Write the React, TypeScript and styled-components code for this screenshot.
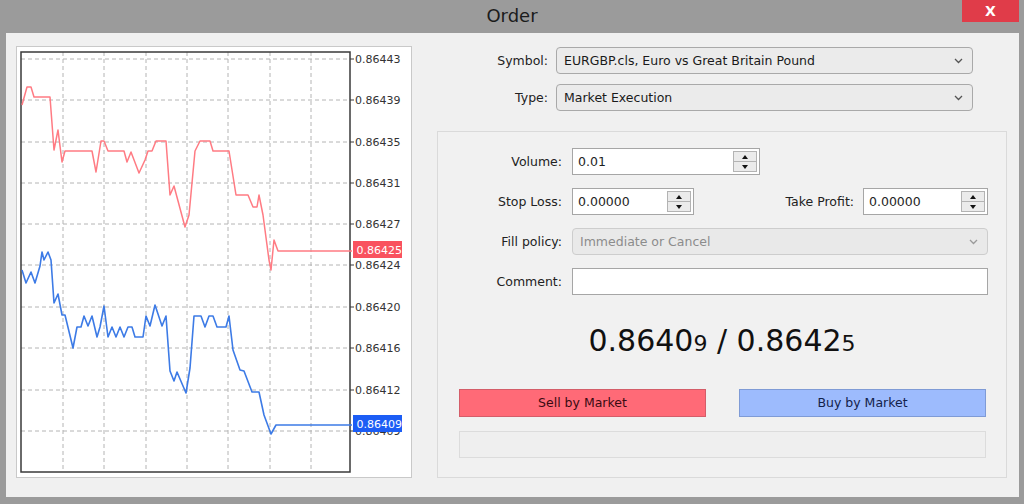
import React from "react";
import styled, { createGlobalStyle } from "styled-components";

const GlobalStyle = createGlobalStyle`
  html, body { margin: 0; padding: 0; background: #9b9b9b; }
  body { font-family: "DejaVu Sans", Verdana, sans-serif; }
  * { box-sizing: border-box; }
`;

const Window = styled.div`
  width: 1024px;
  height: 504px;
  background: #9b9b9b;
  display: flex;
  flex-direction: column;
  overflow: hidden;
`;

const TitleBar = styled.div`
  height: 33px;
  display: grid;
  grid-template-columns: 1fr auto 1fr;
  align-items: start;
`;

const Title = styled.div`
  grid-column: 2;
  font-size: 18px;
  line-height: 31px;
  color: #1c1c1c;
`;

const CloseButton = styled.div`
  grid-column: 3;
  justify-self: end;
  margin-right: 5px;
  width: 57px;
  height: 22px;
  background: #e03c49;
  color: #fff;
  font-size: 14px;
  font-weight: bold;
  line-height: 22px;
  text-align: center;
`;

const Body = styled.div`
  margin: 0 5px 0 6px;
  height: 464px;
  background: #f0f0f0;
  display: flex;
  align-items: flex-start;
  padding: 13px 0 0 10px;
`;

const ChartPanel = styled.div`
  width: 396px;
  height: 432px;
  border: 1px solid #c9c9c9;
  background: #fff;
  flex-shrink: 0;
  display: flex;
`;

const RightCol = styled.div`
  flex: 1;
  padding-top: 1px;
  display: flex;
  flex-direction: column;
`;

const TopGrid = styled.div`
  display: grid;
  grid-template-columns: 136px 417px;
  grid-auto-rows: 27px;
  column-gap: 8px;
  row-gap: 10px;
  align-items: center;
`;

const Label = styled.div`
  font-size: 12.5px;
  color: #222;
  text-align: right;
  white-space: nowrap;
`;

const SelectBox = styled.div<{ $disabled?: boolean }>`
  height: 27px;
  border: 1px solid ${(p) => (p.$disabled ? "#cdcdcd" : "#a9a9a9")};
  border-radius: 4px;
  background: ${(p) => (p.$disabled ? "#e9e9e9" : "#ebebeb")};
  display: flex;
  align-items: center;
  justify-content: space-between;
  padding: 0 9px 0 7px;
  font-size: 12.5px;
  color: ${(p) => (p.$disabled ? "#8c8c8c" : "#1a1a1a")};
  white-space: nowrap;
`;

const GroupBox = styled.div`
  margin: 20px 0 0 25px;
  width: 570px;
  height: 347px;
  border: 1px solid #dadada;
  background: #f1f1f1;
  display: flex;
  flex-direction: column;
  padding-top: 16px;
`;

const FormGrid = styled.div`
  display: grid;
  grid-template-columns: 124px 1fr;
  grid-auto-rows: 27px;
  column-gap: 10px;
  row-gap: 13px;
  padding-right: 18px;
  align-items: center;
`;

const InputBox = styled.div<{ $w?: number }>`
  width: ${(p) => (p.$w ? `${p.$w}px` : "100%")};
  height: 27px;
  border: 1px solid #a6a6a6;
  background: #fff;
  display: flex;
  align-items: stretch;
`;

const InputText = styled.div`
  flex: 1;
  padding-left: 5px;
  font-size: 12.5px;
  line-height: 25px;
  color: #1e1e1e;
`;

const Spinner = styled.div`
  width: 24px;
  margin: 2px 2px 2px 0;
  border: 1px solid #b3b3b3;
  background: #ebebeb;
  display: flex;
  flex-direction: column;
`;

const SpinHalf = styled.div<{ $down?: boolean }>`
  flex: 1;
  display: flex;
  align-items: center;
  justify-content: center;
  border-top: ${(p) => (p.$down ? "1px solid #b3b3b3" : "none")};
`;

const Triangle = styled.div<{ $down?: boolean }>`
  width: 0;
  height: 0;
  border-left: 3.5px solid transparent;
  border-right: 3.5px solid transparent;
  ${(p) =>
    p.$down
      ? "border-top: 4px solid #111;"
      : "border-bottom: 4px solid #111;"}
`;

const SplitRow = styled.div`
  display: flex;
  justify-content: space-between;
  align-items: center;
`;

const InlineGroup = styled.div`
  display: flex;
  align-items: center;
  gap: 9px;
`;

const Price = styled.div`
  margin-top: 28px;
  height: 36px;
  line-height: 36px;
  font-size: 30px;
  color: #111;
  text-align: center;
  white-space: nowrap;
`;

const Small = styled.span`
  font-size: 22px;
`;

const ButtonRow = styled.div`
  margin-top: 30px;
  padding: 0 20px 0 21px;
  display: flex;
  gap: 33px;
`;

const TradeButton = styled.div<{ $kind: "sell" | "buy" }>`
  flex: 1;
  height: 28px;
  border: 1px solid ${(p) => (p.$kind === "sell" ? "#d45d69" : "#7f9bd6")};
  background: ${(p) => (p.$kind === "sell" ? "#ff6a77" : "#9dbbfd")};
  color: ${(p) => (p.$kind === "sell" ? "#3a0a12" : "#13224a")};
  font-size: 12.5px;
  line-height: 26px;
  text-align: center;
`;

const StatusBar = styled.div`
  margin: 14px 20px 0 21px;
  height: 27px;
  border: 1px solid #dcdcdc;
  background: #efefef;
`;

const Chevron: React.FC<{ color?: string }> = ({ color = "#555" }) => (
  <svg width="9" height="6" viewBox="0 0 9 6">
    <path d="M1 1 L4.5 4.5 L8 1" fill="none" stroke={color} strokeWidth="1.3" />
  </svg>
);

const SpinInput: React.FC<{ w?: number; value: string }> = ({ w, value }) => (
  <InputBox $w={w}>
    <InputText>{value}</InputText>
    <Spinner>
      <SpinHalf>
        <Triangle />
      </SpinHalf>
      <SpinHalf $down>
        <Triangle $down />
      </SpinHalf>
    </Spinner>
  </InputBox>
);

const gridX = [46, 87, 129, 170, 211, 253, 294];
const gridY = [12, 53, 95, 136, 177, 218, 260, 301, 343, 384];
const axisLabels = [
  "0.86443",
  "0.86439",
  "0.86435",
  "0.86431",
  "0.86427",
  "0.86424",
  "0.86420",
  "0.86416",
  "0.86412",
  "0.86409",
];

const redPts: [number, number][] = [
  [22, 105], [27, 87], [31, 87], [34, 97], [50, 97], [54, 150], [58, 130], [62, 162],
  [65, 151], [92, 151], [96, 172], [101, 141], [104, 141], [108, 151], [124, 151],
  [127, 162], [131, 152], [139, 173], [145, 160], [148, 151], [152, 151], [156, 141],
  [166, 141], [170, 195], [174, 186], [185, 227], [189, 215], [195, 151], [200, 141],
  [210, 141], [213, 151], [229, 151], [236, 195], [248, 195], [253, 207], [257, 207],
  [259, 195], [263, 215], [269, 260], [271, 270], [274, 240], [278, 251], [352, 251],
];

const bluePts: [number, number][] = [
  [22, 270], [26, 283], [31, 272], [35, 283], [40, 266], [42, 252], [44, 260], [48, 252],
  [51, 260], [54, 303], [58, 294], [62, 315], [65, 315], [73, 348], [77, 327], [81, 327],
  [84, 316], [88, 326], [92, 316], [97, 337], [100, 327], [104, 306], [108, 337],
  [112, 327], [116, 337], [120, 327], [124, 337], [128, 327], [132, 327], [135, 337],
  [143, 337], [146, 316], [150, 326], [155, 305], [162, 326], [166, 316], [170, 371],
  [174, 381], [177, 372], [186, 393], [190, 368], [194, 316], [201, 316], [205, 327],
  [209, 316], [213, 316], [217, 327], [226, 327], [229, 316], [233, 350], [240, 370],
  [244, 371], [252, 392], [259, 392], [264, 415], [271, 434], [276, 425], [352, 425],
];

const toPath = (pts: [number, number][]) => pts.map((p) => p.join(",")).join(" ");

const Chart: React.FC = () => (
  <svg width="394" height="430" viewBox="0 0 394 430" fontFamily="DejaVu Sans, Verdana, sans-serif">
    {gridX.map((x) => (
      <line key={`v${x}`} x1={x} y1={5} x2={x} y2={425} stroke="#b4b4b4" strokeWidth="1" strokeDasharray="4 3" />
    ))}
    {gridY.map((y) => (
      <line key={`h${y}`} x1={4} y1={y} x2={333} y2={y} stroke="#b4b4b4" strokeWidth="1" strokeDasharray="4 3" />
    ))}
    <rect x={4} y={5} width={329} height={420} fill="none" stroke="#3a3a3a" strokeWidth="1.5" />
    {gridY.map((y, i) => (
      <g key={`l${y}`}>
        <line x1={333} y1={y} x2={337} y2={y} stroke="#3a3a3a" strokeWidth="1" />
        <text x={338} y={y + 4} fontSize="11" fill="#333">
          {axisLabels[i]}
        </text>
      </g>
    ))}
    <g transform="translate(-17,-47)">
      <polyline points={toPath(redPts)} fill="none" stroke="#ff7b83" strokeWidth="1.5" strokeLinejoin="round" />
      <polyline points={toPath(bluePts)} fill="none" stroke="#3d7be6" strokeWidth="1.6" strokeLinejoin="round" />
    </g>
    <rect x={336} y={194} width={49} height={17} fill="#f9525f" />
    <text x={339.5} y={207} fontSize="11" fill="#fff">0.86425</text>
    <rect x={336} y={368} width={49} height={17} fill="#1c5df5" />
    <text x={339.5} y={381} fontSize="11" fill="#fff">0.86409</text>
  </svg>
);

export default function App() {
  return (
    <>
      <GlobalStyle />
      <Window>
        <TitleBar>
          <Title>Order</Title>
          <CloseButton>X</CloseButton>
        </TitleBar>
        <Body>
          <ChartPanel>
            <Chart />
          </ChartPanel>
          <RightCol>
            <TopGrid>
              <Label>Symbol:</Label>
              <SelectBox>
                <span>EURGBP.cls, Euro vs Great Britain Pound</span>
                <Chevron />
              </SelectBox>
              <Label>Type:</Label>
              <SelectBox>
                <span>Market Execution</span>
                <Chevron />
              </SelectBox>
            </TopGrid>
            <GroupBox>
              <FormGrid>
                <Label>Volume:</Label>
                <SpinInput w={188} value="0.01" />
                <Label>Stop Loss:</Label>
                <SplitRow>
                  <SpinInput w={122} value="0.00000" />
                  <InlineGroup>
                    <Label>Take Profit:</Label>
                    <SpinInput w={125} value="0.00000" />
                  </InlineGroup>
                </SplitRow>
                <Label>Fill policy:</Label>
                <SelectBox $disabled>
                  <span>Immediate or Cancel</span>
                  <Chevron color="#9a9a9a" />
                </SelectBox>
                <Label>Comment:</Label>
                <InputBox>
                  <InputText />
                </InputBox>
              </FormGrid>
              <Price>
                0.8640<Small>9</Small> / 0.8642<Small>5</Small>
              </Price>
              <ButtonRow>
                <TradeButton $kind="sell">Sell by Market</TradeButton>
                <TradeButton $kind="buy">Buy by Market</TradeButton>
              </ButtonRow>
              <StatusBar />
            </GroupBox>
          </RightCol>
        </Body>
      </Window>
    </>
  );
}
